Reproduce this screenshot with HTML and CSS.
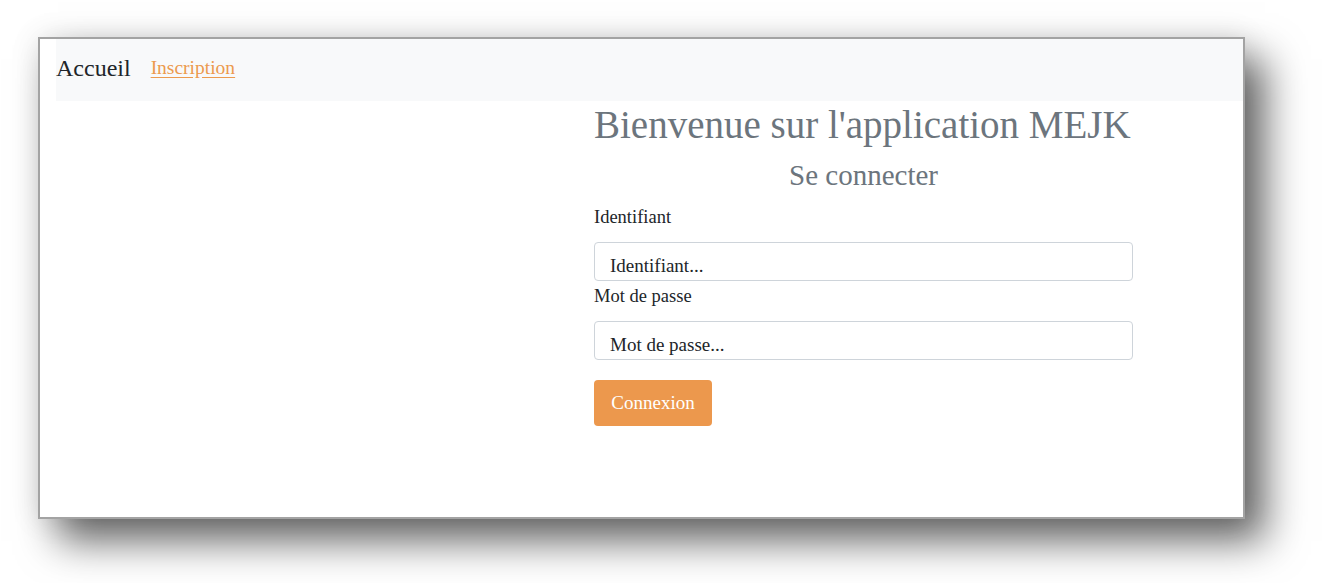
FILE: index.html
```html
<!DOCTYPE html>
<html lang="fr">
<head>
<meta charset="utf-8">
<title>MEJK</title>
<link rel="stylesheet" href="styles.css">
</head>
<body>
<div class="window">
  <nav class="navbar">
    <span class="brand">Accueil</span>
    <a class="nav-link" href="#">Inscription</a>
  </nav>
  <main class="content">
    <div class="login">
      <h1 class="title">Bienvenue sur l'application MEJK</h1>
      <h3 class="subtitle">Se connecter</h3>
      <form class="form">
        <label class="label" for="id">Identifiant</label>
        <div class="input">Identifiant...</div>
        <label class="label label-pw" for="pw">Mot de passe</label>
        <div class="input">Mot de passe...</div>
        <button class="btn" type="button">Connexion</button>
      </form>
    </div>
  </main>
</div>
</body>
</html>
```
FILE: styles.css
```css
html, body {
  margin: 0;
  padding: 0;
  background: #ffffff;
}
body {
  font-family: "Liberation Serif", "Times New Roman", serif;
  color: #212529;
  padding: 37px 0 0 38px;
  min-height: 583px;
  box-sizing: border-box;
}
.window {
  width: 1203px;
  height: 478px;
  border: 2px solid #a3a3a3;
  background: #ffffff;
  box-shadow: 20px 22px 38px rgba(0, 0, 0, 0.6), 0 0 28px rgba(0, 0, 0, 0.1);
}
.navbar {
  margin-left: 16px;
  height: 62px;
  background: #f8f9fa;
  display: flex;
  align-items: center;
  gap: 20px;
  padding-bottom: 4px;
  box-sizing: border-box;
}
.brand {
  font-size: 24px;
  color: #212529;
}
.nav-link {
  font-size: 19.5px;
  color: #ec9a4e;
  text-decoration: underline;
  text-underline-offset: 3px;
}
.content {
  padding-left: 554px;
}
.login {
  width: 539px;
}
.title {
  margin: 0;
  font-weight: normal;
  font-size: 39px;
  line-height: 46px;
  color: #6c757d;
  white-space: nowrap;
  padding-top: 1px;
}
.subtitle {
  margin: 10px 0 0;
  font-weight: normal;
  font-size: 29px;
  line-height: 34px;
  color: #6c757d;
  text-align: center;
}
.form {
  display: flex;
  flex-direction: column;
  align-items: flex-start;
  margin-top: 12px;
}
.label {
  font-size: 18.5px;
  line-height: 22px;
  padding-top: 2px;
  margin-bottom: 14px;
}
.label-pw {
  margin-top: 2px;
}
.input {
  box-sizing: border-box;
  width: 539px;
  height: 39px;
  border: 1px solid #ced4da;
  border-radius: 4px;
  padding: 12px 15px 0;
  font-size: 19px;
  line-height: 22px;
  color: #212529;
}
.btn {
  margin-top: 20px;
  width: 118px;
  height: 46px;
  border: none;
  border-radius: 4px;
  background: #ec984d;
  color: #ffffff;
  font-family: "Liberation Serif", "Times New Roman", serif;
  font-size: 19px;
  padding: 0;
}
```
